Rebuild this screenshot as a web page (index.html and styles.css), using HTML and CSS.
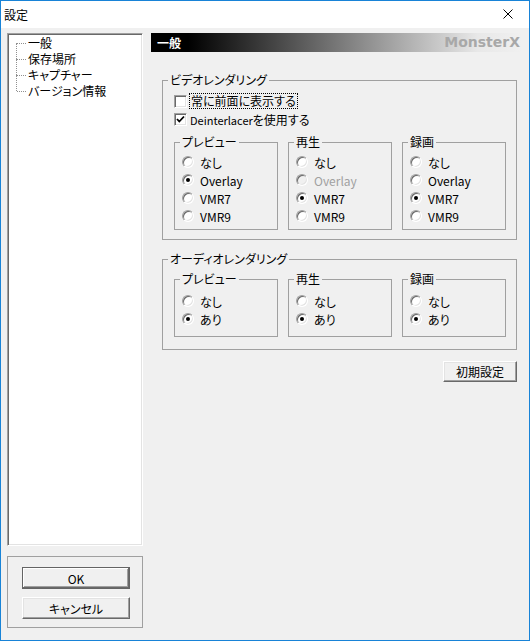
FILE: index.html
```html
<!DOCTYPE html>
<html lang="ja">
<head>
    <meta charset="UTF-8">
    <title>設定</title>
    <link rel="stylesheet" href="styles.css">
</head>
<body>
    <div class="window">
        <div class="titlebar">
            <span class="title">設定</span>
            <svg class="close" width="10" height="10" viewBox="0 0 10 10">
                <path d="M0.5 0.5 L9.5 9.5 M9.5 0.5 L0.5 9.5" stroke="#000" stroke-width="1" fill="none"/>
            </svg>
        </div>
        <div class="content">
            <div class="sidebar">
                <ul class="tree">
                    <li>一般</li>
                    <li>保存場所</li>
                    <li>キャプチャー</li>
                    <li>バージョン情報</li>
                </ul>
                <div class="actions">
                    <button class="btn default">OK</button>
                    <button class="btn">キャンセル</button>
                </div>
            </div>
            <div class="main">
                <div class="header">
                    <span class="header-title">一般</span>
                    <span class="brand">MonsterX</span>
                </div>

                <fieldset class="group video">
                    <legend>ビデオレンダリング</legend>
                    <div class="check-row">
                        <span class="checkbox"></span>
                        <span class="focus">常に前面に表示する</span>
                    </div>
                    <div class="check-row">
                        <span class="checkbox">
                            <svg width="9" height="9" viewBox="0 0 9 9"><path d="M1 4 L3.3 6.5 L8 1.5" stroke="#000" stroke-width="1.8" fill="none"/></svg>
                        </span>
                        <span><span class="latin">Deinterlacer</span>を使用する</span>
                    </div>
                    <div class="subs">
                        <fieldset class="sub">
                            <legend>プレビュー</legend>
                            <div class="radio-row"><span class="radio"></span>なし</div>
                            <div class="radio-row"><span class="radio on"></span>Overlay</div>
                            <div class="radio-row"><span class="radio"></span>VMR7</div>
                            <div class="radio-row"><span class="radio"></span>VMR9</div>
                        </fieldset>
                        <fieldset class="sub">
                            <legend>再生</legend>
                            <div class="radio-row"><span class="radio"></span>なし</div>
                            <div class="radio-row disabled"><span class="radio"></span>Overlay</div>
                            <div class="radio-row"><span class="radio on"></span>VMR7</div>
                            <div class="radio-row"><span class="radio"></span>VMR9</div>
                        </fieldset>
                        <fieldset class="sub">
                            <legend>録画</legend>
                            <div class="radio-row"><span class="radio"></span>なし</div>
                            <div class="radio-row"><span class="radio"></span>Overlay</div>
                            <div class="radio-row"><span class="radio on"></span>VMR7</div>
                            <div class="radio-row"><span class="radio"></span>VMR9</div>
                        </fieldset>
                    </div>
                </fieldset>

                <fieldset class="group audio">
                    <legend>オーディオレンダリング</legend>
                    <div class="subs">
                        <fieldset class="sub">
                            <legend>プレビュー</legend>
                            <div class="radio-row"><span class="radio"></span>なし</div>
                            <div class="radio-row"><span class="radio on"></span>あり</div>
                        </fieldset>
                        <fieldset class="sub">
                            <legend>再生</legend>
                            <div class="radio-row"><span class="radio"></span>なし</div>
                            <div class="radio-row"><span class="radio on"></span>あり</div>
                        </fieldset>
                        <fieldset class="sub">
                            <legend>録画</legend>
                            <div class="radio-row"><span class="radio"></span>なし</div>
                            <div class="radio-row"><span class="radio on"></span>あり</div>
                        </fieldset>
                    </div>
                </fieldset>

                <button class="btn reset">初期設定</button>
            </div>
        </div>
    </div>
</body>
</html>
```

FILE: styles.css
```css
* {
    box-sizing: border-box;
}
body {
    margin: 0;
    font-family: "Noto Sans CJK JP", sans-serif;
    font-size: 12px;
    font-feature-settings: "palt";
    color: #000;
}
.window {
    width: 530px;
    height: 641px;
    border: 1px solid #1883d7;
    background-color: #f0f0f0;
    display: flex;
    flex-direction: column;
}
.titlebar {
    height: 27px;
    background-color: #fff;
    display: flex;
    align-items: center;
    justify-content: space-between;
    padding: 0 16px 1px 3px;
}
.content {
    display: flex;
    padding: 5px 0 0 6px;
}
.sidebar {
    width: 136px;
    display: flex;
    flex-direction: column;
}
.tree {
    list-style: none;
    margin: 0;
    padding: 0;
    height: 513px;
    background-color: #fff;
    border: 1px solid;
    border-color: #a0a0a0 #fff #fff #a0a0a0;
    box-shadow: inset 1px 1px #696969, inset -1px -1px #e3e3e3;
    padding-top: 1px;
}
.tree li {
    position: relative;
    height: 16px;
    line-height: 16px;
    padding-left: 20px;
}
.tree li::before {
    content: '';
    position: absolute;
    left: 9px;
    top: 8px;
    width: 9px;
    border-top: 1px dotted #909090;
}
.tree li::after {
    content: '';
    position: absolute;
    left: 8px;
    top: 8px;
    height: 16px;
    border-left: 1px dotted #909090;
}
.tree li:last-child::after {
    display: none;
}
.actions {
    margin-top: 10px;
    height: 72px;
    border: 1px solid #a0a0a0;
    padding: 10px 12px 0 14px;
    display: flex;
    flex-direction: column;
    gap: 8px;
}
.btn {
    font-family: inherit;
    font-size: 12px;
    font-feature-settings: "palt";
    height: 22px;
    padding: 0;
    background-color: #f0f0f0;
    border: 1px solid;
    border-color: #fff #696969 #696969 #fff;
    box-shadow: inset -1px -1px #a0a0a0, inset 1px 1px #e3e3e3;
    color: #000;
}
.btn.default {
    border-color: #646464;
    box-shadow: inset -1px -1px #696969, inset 1px 1px #fff, inset -2px -2px #a0a0a0;
}
.main {
    margin-left: 8px;
    width: 371px;
    display: flex;
    flex-direction: column;
}
.header {
    height: 19px;
    background: linear-gradient(to right, #000 0%, #000 10%, #e8e8e8 88%, #f0f0f0 100%);
    display: flex;
    align-items: center;
    justify-content: space-between;
    padding: 0 2px 0 6px;
}
.header-title {
    color: #fff;
    font-weight: bold;
    line-height: 19px;
}
.brand {
    font-family: "DejaVu Sans", sans-serif;
    font-weight: bold;
    font-size: 14px;
    color: #a8a8a8;
    line-height: 19px;
}
fieldset {
    margin: 0;
    padding: 0;
    min-width: 0;
    border: 1px solid #a0a0a0;
}
legend {
    padding: 0 2px;
    margin-left: 5px;
    line-height: 14px;
}
.group {
    margin: 0 5px 0 11px;
}
.group.video {
    margin-top: 21px;
    padding: 5px 0 9px 0;
}
.group.audio {
    margin-top: 12px;
    padding: 6px 0 12px 0;
}
.check-row {
    height: 18px;
    display: flex;
    align-items: center;
    margin-left: 11px;
}
.checkbox {
    width: 13px;
    height: 13px;
    background-color: #fff;
    border: 1px solid;
    border-color: #a0a0a0 #fff #fff #a0a0a0;
    box-shadow: inset 1px 1px #696969, inset -1px -1px #e3e3e3;
    display: flex;
    align-items: center;
    justify-content: center;
    margin-right: 3px;
}
.focus {
    outline: 1px dotted #000;
    padding: 0 1px;
    line-height: 14px;
}
.latin {
    font-size: 11px;
}
.subs {
    display: grid;
    grid-template-columns: repeat(3, 104px);
    column-gap: 10px;
    margin: 0 10px 0 11px;
}
.video .subs {
    margin-top: 7px;
}
.video .sub {
    padding: 4px 0 4px 0;
}
.audio .sub {
    padding: 6px 0 8px 0;
}
.radio-row {
    height: 18px;
    display: flex;
    align-items: center;
}
.radio-row.disabled {
    color: #a0a0a0;
}
.radio {
    width: 12px;
    height: 12px;
    margin: 0 6px 0 7px;
    border-radius: 50%;
    background-color: #fff;
    border: 1px solid;
    border-color: #a0a0a0 #fff #fff #a0a0a0;
    box-shadow: inset 1px 1px #696969, inset -1px -1px #e3e3e3;
    display: flex;
    align-items: center;
    justify-content: center;
}
.disabled .radio {
    background-color: #f0f0f0;
}
.radio.on::after {
    content: '';
    width: 4px;
    height: 4px;
    border-radius: 50%;
    background-color: #000;
}
.btn.reset {
    align-self: flex-end;
    margin: 11px 5px 0 0;
    width: 74px;
    height: 21px;
}
```
